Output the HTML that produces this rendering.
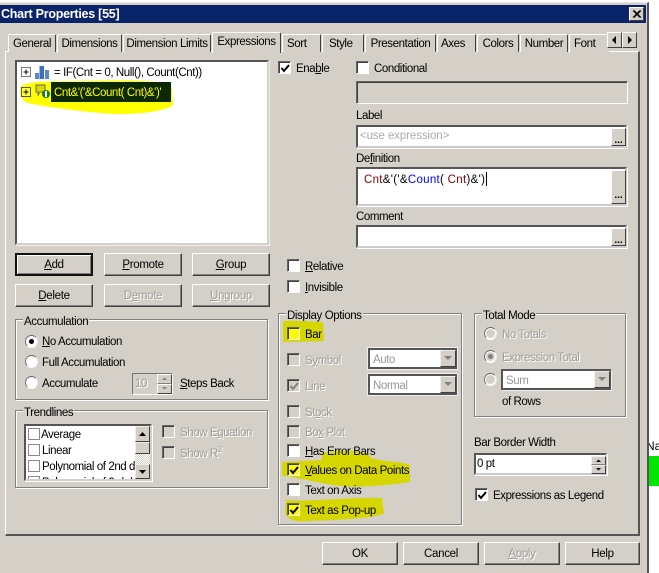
<!DOCTYPE html>
<html><head><meta charset="utf-8">
<style>
html,body{margin:0;padding:0;width:659px;height:573px;overflow:hidden;background:#fff}
*{box-sizing:border-box}
body{font:11.5px/14px "Liberation Sans",sans-serif;color:#000;position:relative}
.a,.t,.r,.s,.g,.c,.o,.tab{position:absolute}
.t{white-space:nowrap;letter-spacing:-.42px;margin-top:1px}
.d{color:#a09d98;text-shadow:1px 1px 0 #fff}
u{text-decoration:underline}
.r{background:#d4d0c8;border:1px solid;border-color:#fff #404040 #404040 #fff;box-shadow:inset -1px -1px 0 #808080;text-align:center;line-height:23px;letter-spacing:-.3px}
.s{background:#fff;border:2px solid;border-color:#555 #d4d0c8 #d4d0c8 #555;box-shadow:0 0 0 0 #fff,1px 1px 0 #fff}
.g{border:1px solid #808080;box-shadow:inset 1px 1px 0 #fff,1px 1px 0 #fff}
.g>span{position:absolute;left:7px;top:-5px;background:#d4d0c8;padding:0 1px;white-space:nowrap;letter-spacing:-.4px}
.c{width:13px;height:13px;border:1px solid;border-color:#666 #fff #fff #666;background:#fff;box-shadow:inset 1px 1px 0 #404040}
.c.dis{background:#d4d0c8}
.c.y{background:#ffff00}
.c svg{position:absolute;left:1px;top:1px}
.o{width:13px;height:13px;border-radius:50%;background:#fff;border:1px solid;border-color:#666 #eee #fff #777}
.o.dis{background:#d4d0c8;box-shadow:0 0 0 1px #fff inset}
.o i{position:absolute;left:3px;top:3px;width:5px;height:5px;border-radius:50%;background:#000}
.o.dis i{background:#808080}
.tab{background:#d4d0c8;border-top:1px solid #fff;border-left:1px solid #fff;border-right:1px solid #404040;text-align:center;line-height:18px;letter-spacing:-.4px;border-radius:2px 2px 0 0;white-space:nowrap}
.dd{position:absolute;background:#d4d0c8;border:1px solid;border-color:#eee #404040 #404040 #eee;width:16px}
.btn3{position:absolute;right:0;bottom:0;width:16px;height:16px;background:#d4d0c8;border:1px solid;border-color:#fff #404040 #404040 #fff;font:bold 10px/9px "Liberation Sans",sans-serif;text-align:center;color:#000}
</style></head><body>
<!-- green fragment -->
<div class="a" style="left:649px;top:456px;width:10px;height:30px;background:#00e600"></div>
<div class="t" style="left:646px;top:438px;letter-spacing:0;font-size:12px">Na</div>
<!-- window -->
<div class="a" style="left:0;top:2px;width:649px;height:571px;background:#d4d0c8;border-top:1px solid #e8e6e0;border-right:2px solid #555"></div>
<div class="a" style="left:0;top:5px;width:646px;height:18px;background:#0a246a"></div>
<div class="t" style="left:1px;top:6px;color:#fff;font-weight:bold;font-size:12.5px;letter-spacing:-.25px">Chart Properties [55]</div>
<div class="a" style="left:629px;top:7px;width:15px;height:14px;background:#d4d0c8;border:1px solid;border-color:#fff #404040 #404040 #fff"><svg width="13" height="12" style="position:absolute;left:0;top:0"><path d="M3 2.500L10 9.500M4 2.500L11 9.500M10 2.500L3 9.500M11 2.500L4 9.500" stroke="#000" stroke-width="1"/></svg></div>

<!-- panel -->
<div class="a" style="left:5px;top:51px;width:635px;height:485px;background:#d4d0c8;border:1px solid;border-color:#fff #555 #555 #fff;border-width:1px 2px 2px 1px"></div>

<!-- tabs -->
<div class="tab" style="left:8px;top:34px;width:48px;height:18px">General</div>
<div class="tab" style="left:57px;top:34px;width:65px;height:18px">Dimensions</div>
<div class="tab" style="left:123px;top:34px;width:88px;height:18px">Dimension Limits</div>
<div class="tab" style="left:212px;top:32px;width:69px;height:21px;z-index:2">Expressions</div>
<div class="tab" style="left:282px;top:34px;width:39px;height:18px;text-align:left;padding-left:4px">Sort</div>
<div class="tab" style="left:322px;top:34px;width:42px;height:18px;text-align:left;padding-left:6px">Style</div>
<div class="tab" style="left:365px;top:34px;width:71px;height:18px">Presentation</div>
<div class="tab" style="left:437px;top:34px;width:39px;height:18px;text-align:left;padding-left:3px;">Axes</div>
<div class="tab" style="left:477px;top:34px;width:42px;height:18px">Colors</div>
<div class="tab" style="left:520px;top:34px;width:48px;height:18px">Number</div>
<div class="tab" style="left:569px;top:34px;width:40px;height:18px;text-align:left;padding-left:4px;border-right:0">Font</div>
<div class="a" style="left:607px;top:32px;width:15px;height:16px;background:#d4d0c8;border:1px solid;border-color:#fff #404040 #404040 #fff"><svg width="13" height="14"><path d="M8 3V11L4 7Z" fill="#000"/></svg></div>
<div class="a" style="left:622px;top:32px;width:15px;height:16px;background:#d4d0c8;border:1px solid;border-color:#fff #404040 #404040 #fff"><svg width="13" height="14"><path d="M5 3V11L9 7Z" fill="#000"/></svg></div>

<!-- tree -->
<div class="s" style="left:15px;top:60px;width:254px;height:185px;border-color:#555 #d4d0c8 #d4d0c8 #555;box-shadow:1px 1px 0 #eee"></div>
<svg class="a" style="left:0;top:0;z-index:1" width="280" height="125">
<path d="M21 86C30 80 60 82 90 81C130 80 170 80 172 88L173 105C165 112 130 116 100 113C70 110 40 106 28 103C20 100 19 92 21 86Z" fill="#ffff00"/>
<rect x="51" y="82" width="120" height="20" fill="#0c2800"/>
<path d="M21.500 67.500h9v9h-9z" fill="#fff" stroke="#777"/><path d="M23.500 72h5M26 69.500v5" stroke="#000"/>
<path d="M21.500 87.500h9v9h-9z" fill="#ffff40" stroke="#555"/><path d="M23.500 92h5M26 89.500v5" stroke="#000"/>
<rect x="35" y="73" width="4" height="6" fill="#5b87cf"/><rect x="39.500" y="66" width="4.500" height="13" fill="#3a6fc4"/><rect x="45" y="70" width="4" height="9" fill="#5b87cf"/>
<path d="M36 85h9v7h-5l-2 3v-3h-2z" fill="#d8d800" stroke="#666"/>
<circle cx="46" cy="94" r="4" fill="#1c7a1c"/><rect x="45" y="91" width="2" height="6" fill="#fff"/>
</svg>
<div class="t" style="left:54px;top:65px;z-index:2">= IF(Cnt = 0, Null(), Count(Cnt))</div>
<div class="t" style="left:54px;top:85px;z-index:2;color:#ffff00">Cnt&amp;'('&amp;Count( Cnt)&amp;')'</div>

<!-- buttons left -->
<div class="r" style="left:15px;top:253px;width:78px;height:23px;border:2px solid #000;border-color:#111;box-shadow:inset 1px 1px 0 #fff,inset -1px -1px 0 #808080;line-height:21px"><u>A</u>dd</div>
<div class="r" style="left:104px;top:253px;width:78px;height:23px"><u>P</u>romote</div>
<div class="r" style="left:192px;top:253px;width:78px;height:23px"><u>G</u>roup</div>
<div class="r" style="left:15px;top:284px;width:78px;height:23px"><u>D</u>elete</div>
<div class="r d" style="left:104px;top:284px;width:78px;height:23px">D<u>e</u>mote</div>
<div class="r d" style="left:192px;top:284px;width:78px;height:23px"><u>U</u>ngroup</div>

<!-- Accumulation -->
<div class="g" style="left:15px;top:319px;width:253px;height:81px"><span>Accumulation</span></div>
<div class="o" style="left:25px;top:335px"><i></i></div><div class="t" style="left:42px;top:334px"><u>N</u>o Accumulation</div>
<div class="o" style="left:25px;top:355px"></div><div class="t" style="left:42px;top:355px">Full Accumulation</div>
<div class="o" style="left:25px;top:376px"></div><div class="t" style="left:42px;top:376px">Accumulate</div>
<div class="a" style="left:132px;top:373px;width:41px;height:22px;border:1px solid;border-color:#777 #fff #fff #777;background:#d4d0c8"></div>
<div class="t d" style="left:135px;top:376px">10</div>
<div class="a" style="left:157px;top:374px;width:15px;height:10px;background:#d4d0c8;border:1px solid;border-color:#fff #404040 #808080 #fff"><svg width="13" height="8" style="display:block"><path d="M4 5h5L6.500 2.500Z" fill="#808080"/></svg></div>
<div class="a" style="left:157px;top:384px;width:15px;height:10px;background:#d4d0c8;border:1px solid;border-color:#fff #404040 #404040 #fff"><svg width="13" height="8" style="display:block"><path d="M4 2h5L6.500 4.500Z" fill="#808080"/></svg></div>
<div class="t" style="left:180px;top:376px"><u>S</u>teps Back</div>

<!-- Trendlines -->
<div class="g" style="left:15px;top:410px;width:253px;height:78px"><span>Trendlines</span></div>
<div class="s" style="left:24px;top:424px;width:128px;height:57px;overflow:hidden;box-shadow:1px 1px 0 #fff">
<div style="position:absolute;left:2px;top:2px;width:12px;height:12px;border:1px solid #888"></div><div class="t" style="left:15px;top:1px">Average</div>
<div style="position:absolute;left:2px;top:18px;width:12px;height:12px;border:1px solid #888"></div><div class="t" style="left:16px;top:17px">Linear</div>
<div style="position:absolute;left:2px;top:34px;width:12px;height:12px;border:1px solid #888"></div><div class="t" style="left:16px;top:33px;width:93px;overflow:hidden">Polynomial of 2nd degree</div>
<div style="position:absolute;left:2px;top:50px;width:12px;height:12px;border:1px solid #888"></div><div class="t" style="left:16px;top:49px;width:93px;overflow:hidden">Polynomial of 3rd degree</div>
<div style="position:absolute;left:109px;top:0;width:15px;height:53px;background:repeating-conic-gradient(#fff 0 25%,#d4d0c8 0 50%) 0 0/2px 2px"></div>
<div class="a" style="left:109px;top:0;width:15px;height:16px;background:#d4d0c8;border:1px solid;border-color:#eee #404040 #404040 #eee"><svg width="13" height="14" style="display:block"><path d="M3 9h7L6.500 5Z" fill="#000"/></svg></div>
<div class="a" style="left:109px;top:16px;width:15px;height:12px;background:#d4d0c8;border:1px solid;border-color:#eee #404040 #404040 #eee"></div>
<div class="a" style="left:109px;top:38px;width:15px;height:15px;background:#d4d0c8;border:1px solid;border-color:#eee #404040 #404040 #eee"><svg width="13" height="13" style="display:block"><path d="M3 5h7L6.500 9Z" fill="#000"/></svg></div>
</div>
<div class="c dis" style="left:162px;top:425px"></div><div class="t d" style="left:180px;top:425px">Show E<u>q</u>uation</div>
<div class="c dis" style="left:162px;top:446px"></div><div class="t d" style="left:180px;top:446px">Show R<sup style="font-size:8px;line-height:0">2</sup></div>

<!-- Right top -->
<div class="c" style="left:278px;top:61px;width:13px;height:13px"><svg width="11" height="11"><path d="M1.500 5l2.500 3 5-6" fill="none" stroke="#000" stroke-width="2"/></svg></div>
<div class="t" style="left:296px;top:61px">Ena<u>b</u>le</div>
<div class="c" style="left:356px;top:61px"></div>
<div class="t" style="left:374px;top:61px">Conditional</div>
<div class="a" style="left:356px;top:81px;width:272px;height:23px;border:1px solid;border-color:#666 #fff #fff #666;box-shadow:inset 1px 1px 0 #404040"></div>
<div class="t" style="left:356px;top:108px">Label</div>

<div class="s" style="left:356px;top:125px;width:271px;height:23px;border-color:#555 #ccc #ccc #555"></div>
<div class="t" style="left:360px;top:128px;color:#aaa;letter-spacing:-.1px">&lt;use expression&gt;</div>
<div class="btn3" style="left:611px;top:128px;right:auto;bottom:auto;width:15px;height:18px;line-height:24px">...</div>

<div class="t" style="left:356px;top:151px">De<u>f</u>inition</div>
<div class="s" style="left:356px;top:167px;width:271px;height:39px;border-color:#555 #ccc #ccc #555"></div>
<div class="t" style="left:364px;top:172px;letter-spacing:.3px;color:#000"><span style="color:#800000">Cnt</span>&amp;'('&amp;<span style="color:#0000ff">Count</span>( <span style="color:#800000">Cnt</span>)&amp;')'</div>
<div class="a" style="left:486px;top:172px;width:1px;height:14px;background:#000"></div>
<div class="btn3" style="left:611px;top:170px;right:auto;bottom:auto;width:15px;height:34px;line-height:49px">...</div>

<div class="t" style="left:356px;top:209px">Comment</div>
<div class="s" style="left:356px;top:225px;width:271px;height:23px;border-color:#555 #ccc #ccc #555"></div>
<div class="btn3" style="left:611px;top:228px;right:auto;bottom:auto;width:15px;height:18px;line-height:24px">...</div>

<div class="c" style="left:287px;top:259px"></div><div class="t" style="left:305px;top:259px"><u>R</u>elative</div>
<div class="c" style="left:287px;top:280px"></div><div class="t" style="left:305px;top:280px"><u>I</u>nvisible</div>

<!-- Display Options -->
<div class="g" style="left:278px;top:313px;width:184px;height:212px"><span>Display Options</span></div>
<svg class="a" style="left:0;top:0" width="659" height="573">
<path d="M283 321C295 320 315 322 323 322L324 341L283 342Z" fill="#d6d600"/>
<path d="M322 453C340 449 370 451 370 457C372 461 408 462 410 465L410 482C390 485 360 488 340 486C320 484 300 477 282 476L282 462L322 460Z" fill="#d6d600"/>
<path d="M286 500C310 502 350 497 382 498L384 513C380 518 340 520 308 521C295 523 285 518 285 512Z" fill="#d6d600"/>
</svg>
<div class="c y" style="left:287px;top:327px;border-color:#666 #eee #eee #666"></div><div class="t" style="left:305px;top:327px">Bar</div>
<div class="c dis" style="left:287px;top:353px"></div><div class="t d" style="left:305px;top:353px">S<u>y</u>mbol</div>
<div class="c dis" style="left:287px;top:379px"><svg width="11" height="11"><path d="M1.500 5l2.500 3 5-6" fill="none" stroke="#808080" stroke-width="2"/></svg></div><div class="t d" style="left:305px;top:379px">Line</div>
<div class="c dis" style="left:287px;top:405px"></div><div class="t d" style="left:305px;top:405px">St<u>o</u>ck</div>
<div class="c dis" style="left:287px;top:425px"></div><div class="t d" style="left:305px;top:425px">Bo<u>x</u> Plot</div>
<div class="c" style="left:287px;top:444px"></div><div class="t" style="left:305px;top:444px"><u>H</u>as Error Bars</div>
<div class="c y" style="left:287px;top:463px"><svg width="11" height="11"><path d="M1.500 5l2.500 3 5-6" fill="none" stroke="#000" stroke-width="2"/></svg></div><div class="t" style="left:305px;top:463px"><u>V</u>alues on Data Points</div>
<div class="c" style="left:287px;top:483px"></div><div class="t" style="left:305px;top:483px">Text on Axis</div>
<div class="c y" style="left:287px;top:503px"><svg width="11" height="11"><path d="M1.500 5l2.500 3 5-6" fill="none" stroke="#000" stroke-width="2"/></svg></div><div class="t" style="left:305px;top:503px">Text as Pop-up</div>

<div class="s" style="left:368px;top:348px;width:89px;height:21px;border-color:#555;box-shadow:0 0 0 1px #eee"></div>
<div class="t" style="left:373px;top:352px;color:#999">Auto</div>
<div class="dd" style="left:440px;top:350px;height:17px"><svg width="14" height="15" style="display:block"><path d="M3 5h8L7 9Z" fill="#808080"/></svg></div>
<div class="s" style="left:368px;top:374px;width:89px;height:21px;border-color:#555;box-shadow:0 0 0 1px #eee"></div>
<div class="t" style="left:373px;top:378px;color:#999">Normal</div>
<div class="dd" style="left:440px;top:376px;height:17px"><svg width="14" height="15" style="display:block"><path d="M3 5h8L7 9Z" fill="#808080"/></svg></div>

<!-- Total Mode -->
<div class="g" style="left:474px;top:313px;width:152px;height:104px"><span style="left:7px">Total Mode</span></div>
<div class="o dis" style="left:484px;top:327px"></div><div class="t d" style="left:502px;top:327px">No Totals</div>
<div class="o dis" style="left:484px;top:350px"><i></i></div><div class="t d" style="left:502px;top:350px">Expression Total</div>
<div class="o dis" style="left:484px;top:373px"></div>
<div class="s" style="left:501px;top:369px;width:110px;height:21px;border-color:#555;box-shadow:1px 1px 0 #eee"></div>
<div class="t" style="left:506px;top:373px;color:#999">Sum</div>
<div class="dd" style="left:594px;top:371px;height:17px"><svg width="14" height="15" style="display:block"><path d="M3 5h8L7 9Z" fill="#808080"/></svg></div>
<div class="t" style="left:502px;top:394px">of Rows</div>

<div class="t" style="left:474px;top:435px">Bar Border Width</div>
<div class="s" style="left:474px;top:453px;width:133px;height:22px;border-color:#555 #ccc #ccc #555;box-shadow:1px 1px 0 #fff"></div>
<div class="t" style="left:477px;top:456px">0 pt</div>
<div class="a" style="left:591px;top:456px;width:15px;height:9px;background:#d4d0c8;border:1px solid;border-color:#eee #404040 #808080 #eee"><svg width="13" height="7" style="display:block"><path d="M4 5h5L6.500 2.500Z" fill="#000"/></svg></div>
<div class="a" style="left:591px;top:465px;width:15px;height:9px;background:#d4d0c8;border:1px solid;border-color:#eee #404040 #404040 #eee"><svg width="13" height="7" style="display:block"><path d="M4 2h5L6.500 4.500Z" fill="#000"/></svg></div>
<div class="c" style="left:475px;top:488px"><svg width="11" height="11"><path d="M1.500 5l2.500 3 5-6" fill="none" stroke="#000" stroke-width="2"/></svg></div>
<div class="t" style="left:493px;top:488px">Expressions as Legend</div>

<!-- Bottom buttons -->
<div class="r" style="left:322px;top:542px;width:76px;height:23px">OK</div>
<div class="r" style="left:403px;top:542px;width:76px;height:23px">Cancel</div>
<div class="r d" style="left:484px;top:542px;width:76px;height:23px"><u>A</u>pply</div>
<div class="r" style="left:565px;top:542px;width:75px;height:23px">Help</div>
</body></html>
